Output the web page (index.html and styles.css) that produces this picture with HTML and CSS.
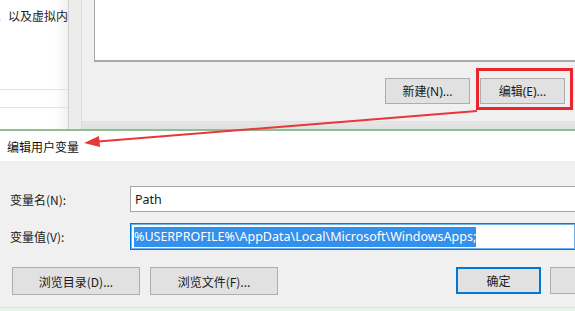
FILE: index.html
```html
<!DOCTYPE html>
<html lang="zh-CN">
<head>
<meta charset="utf-8">
<title>编辑用户变量</title>
<link rel="stylesheet" href="styles.css">
</head>
<body>
<div class="screen">
  <div class="top">
    <div class="left-panel">
      <div class="left-text">，以及虚拟内存</div>
      <div class="left-line l1"></div>
      <div class="left-line l2"></div>
    </div>
    <div class="frame"></div>
    <div class="env-dialog">
      <div class="listbox"></div>
      <div class="top-buttons">
        <button class="btn btn-top">新建(N)...</button>
        <button class="btn btn-top">编辑(E)...</button>
      </div>
    </div>
  </div>
  <div class="edit-dialog">
    <div class="titlebar">编辑用户变量</div>
    <div class="body">
      <div class="row">
        <label class="label">变量名(N):</label>
        <div class="input">Path</div>
      </div>
      <div class="row row2">
        <label class="label">变量值(V):</label>
        <div class="input focused"><span class="sel">%USERPROFILE%\AppData\Local\Microsoft\WindowsApps;</span></div>
      </div>
      <div class="buttons">
        <button class="btn btn-browse">浏览目录(D)...</button>
        <button class="btn btn-browse">浏览文件(F)...</button>
        <div class="spacer"></div>
        <button class="btn btn-ok">确定</button>
        <button class="btn btn-cancel"></button>
      </div>
    </div>
    <div class="bottom-edge"></div>
  </div>
  <div class="redbox"></div>
  <svg class="arrow" width="575" height="311" viewBox="0 0 575 311">
    <line x1="477" y1="111" x2="98" y2="141.5" stroke="#e8363a" stroke-width="2"/>
    <polygon points="84,143 99,136 100,147" fill="#e8363a"/>
  </svg>
</div>
</body>
</html>
```
FILE: styles.css
```css
* { box-sizing: border-box; }
html, body { margin: 0; padding: 0; }
body {
  width: 575px;
  height: 311px;
  overflow: hidden;
  font-family: "Noto Sans", "Noto Sans CJK SC", sans-serif;
  font-size: 12px;
  color: #1a1a1a;
  background: #f0f0f0;
}
.screen {
  position: relative;
  width: 575px;
  height: 311px;
  overflow: hidden;
  display: flex;
  flex-direction: column;
}
.top {
  height: 129px;
  display: flex;
  flex-shrink: 0;
  background: linear-gradient(#f0f0f0 0, #f0f0f0 121px, #e6e6e6 122px, #e0e0e0 129px);
}
.left-panel {
  width: 68px;
  flex-shrink: 0;
  background: linear-gradient(90deg, #ffffff 0, #ffffff 54px, #f1f1f1 68px);
  position: relative;
  overflow: hidden;
  display: flex;
  flex-direction: column;
}
.left-text {
  margin-top: 8px;
  margin-left: -4px;
  white-space: nowrap;
  font-family: "Noto Sans CJK SC", sans-serif;
  font-size: 12px;
  line-height: 16px;
  color: #222;
}
.left-line {
  height: 1px;
  background: #e3e3e3;
}
.l1 { margin-top: 65px; }
.l2 { margin-top: 17px; }
.frame {
  width: 14px;
  flex-shrink: 0;
  background: #ececec;
  border-left: 1px solid #cfcfcf;
  border-right: 1px solid #dcdcdc;
}
.env-dialog {
  flex: 1;
  display: flex;
  flex-direction: column;
  border-bottom: 1px solid #e2e2e2;
  height: 122px;
}
.listbox {
  margin-left: 12px;
  height: 62px;
  background: #fff;
  border-left: 1px solid #a9a9a9;
  border-bottom: 2px solid #a9a9a9;
}
.top-buttons {
  display: flex;
  gap: 10px;
  margin-top: 16px;
  margin-left: 303px;
}
.btn {
  font-family: "Noto Sans", "Noto Sans CJK SC", sans-serif;
  font-size: 12px;
  color: #1a1a1a;
  background: #e1e1e1;
  border: 1px solid #adadad;
  padding: 0;
  margin: 0;
  display: flex;
  align-items: center;
  justify-content: center;
  flex-shrink: 0;
}
.btn-top {
  width: 85px;
  height: 26px;
}
.edit-dialog {
  flex: 1;
  display: flex;
  flex-direction: column;
  border-top: 2px solid #8fbf92;
}
.titlebar {
  height: 30px;
  background: #fff;
  padding-left: 7px;
  display: flex;
  align-items: center;
  font-family: "Noto Sans CJK SC", sans-serif;
  font-size: 12px;
  color: #111;
  flex-shrink: 0;
}
.body {
  flex: 1;
  background: #f0f0f0;
  padding-top: 25px;
  padding-left: 12px;
}
.row {
  display: flex;
  align-items: center;
  height: 26px;
}
.row2 {
  margin-top: 11px;
  height: 27px;
}
.label {
  width: 118px;
  flex-shrink: 0;
  font-family: "Noto Sans CJK SC", sans-serif;
  font-size: 12px;
  color: #1a1a1a;
  margin-left: -2px;
  margin-right: 2px;
}
.input {
  flex: 1;
  height: 100%;
  background: #fff;
  border: 1px solid #a5a5a5;
  border-right: none;
  padding-left: 4px;
  display: flex;
  align-items: center;
  font-family: "Noto Sans", sans-serif;
  font-size: 12.5px;
  white-space: nowrap;
  overflow: hidden;
}
.input.focused {
  border: 1px solid #0078d7;
  border-right: none;
  box-shadow: inset 0 0 0 1px #6fb2ec;
  padding-left: 3px;
}
.sel {
  background: #3390ec;
  color: #fff;
  line-height: 20px;
}
.buttons {
  display: flex;
  margin-top: 17px;
  gap: 10px;
}
.btn-browse {
  width: 128px;
  height: 28px;
  font-family: "Noto Sans CJK SC", "Noto Sans", sans-serif;
}
.spacer { width: 158px; flex-shrink: 0; }
.btn-ok {
  width: 85px;
  height: 27px;
  border: 2px solid #0078d7;
  font-family: "Noto Sans CJK SC", sans-serif;
}
.btn-cancel {
  width: 60px;
  height: 27px;
  margin-left: -1px;
}
.bottom-edge {
  height: 4px;
  background: #e6f4e6;
  border-top: 1px solid #d4ead4;
  flex-shrink: 0;
}
.redbox {
  position: absolute;
  left: 476px;
  top: 68px;
  width: 97px;
  height: 42px;
  border: 3px solid #e8262b;
}
.arrow {
  position: absolute;
  left: 0;
  top: 0;
  pointer-events: none;
}
```
